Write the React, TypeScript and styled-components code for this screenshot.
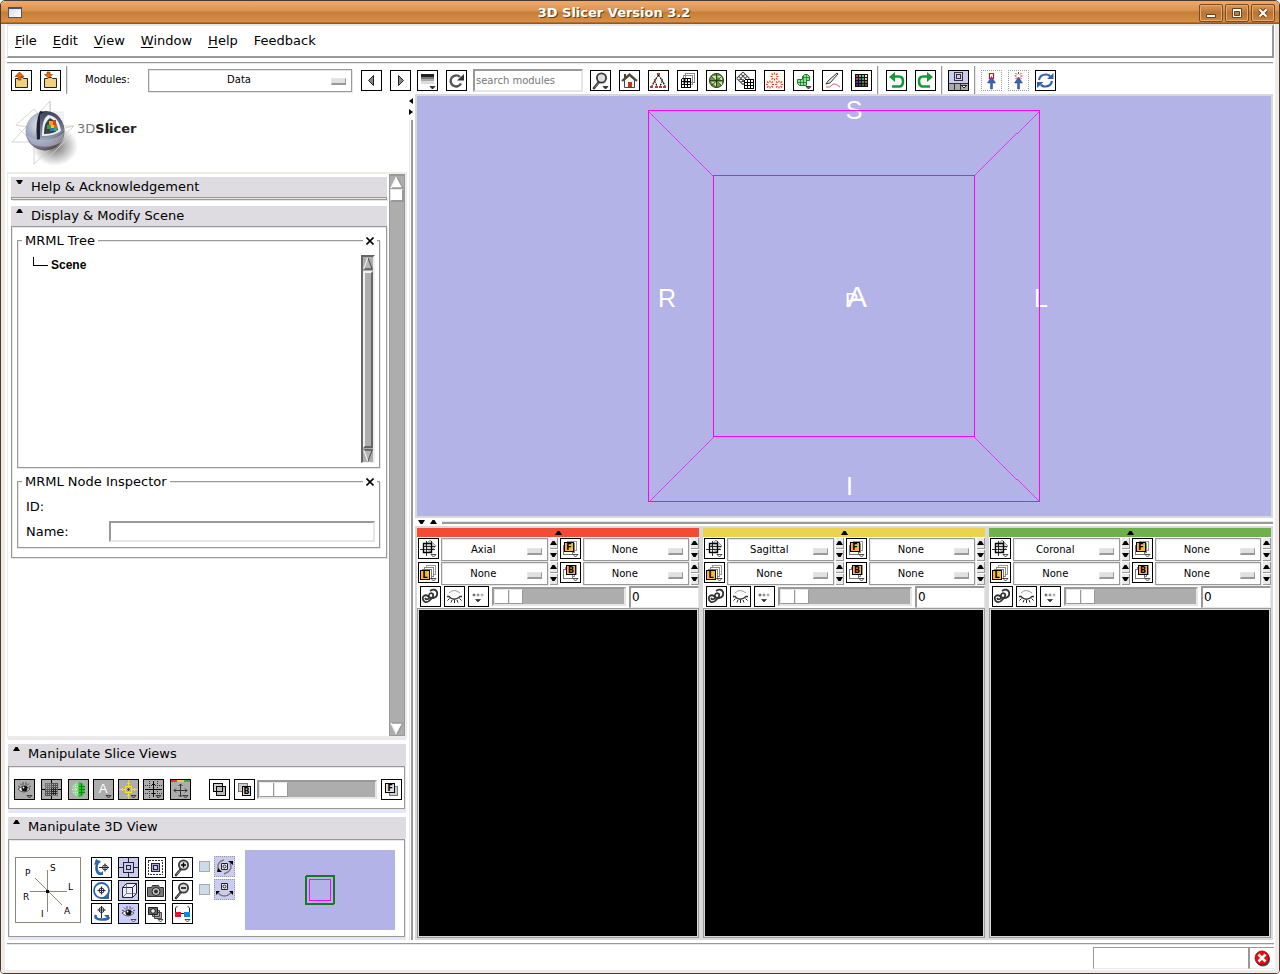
import React from "react";
import styled, { createGlobalStyle } from "styled-components";

const GlobalStyle = createGlobalStyle`
  * { box-sizing: border-box; }
  body { margin: 0; background: #fff; color: #000; font: 13px/16px "DejaVu Sans", Verdana, sans-serif; }
  button, input, select { font: inherit; color: inherit; margin: 0; padding: 0; border: 0; border-radius: 0; background: none; }
`;

const groove = `
  border: 1px solid #999;
  box-shadow: 1px 1px 0 #e6e6e6, inset 1px 1px 0 #e6e6e6;
`;
const sunken = `
  border: 2px solid;
  border-color: #999 #e6e6e6 #e6e6e6 #999;
`;

/* ---------- window frame ---------- */
const Window = styled.div`
  min-height: 100vh;
  display: flex;
  flex-direction: column;
  border: 1px solid #4a3a30;
  border-radius: 5px 5px 4px 4px;
  overflow: hidden;
`;
const TitleBar = styled.header`
  height: 23px;
  flex: none;
  display: grid;
  grid-template-columns: 22px 1fr 77px;
  align-items: center;
  padding: 0 4px 0 7px;
  background: linear-gradient(#eda96d, #dd9553 40%, #c67f38 50%, #d88e45 90%, #94571f 96%);
`;
const AppIcon = styled.span`
  width: 14px;
  height: 11px;
  border: 1px solid #555;
  border-top: 2px solid #36557c;
  background: linear-gradient(135deg, #dcdcdc, #fff);
`;
const Title = styled.h1`
  margin: 0;
  font-size: 13px;
  line-height: 20px;
  text-align: center;
  color: #fff;
  text-shadow: 1px 1px 0 #6d3f14;
`;
const WindowButtons = styled.div`
  display: flex;
  gap: 2px;
  justify-content: flex-end;
`;
const WindowButton = styled.button`
  width: 24px;
  height: 18px;
  display: flex;
  align-items: center;
  justify-content: center;
  border: 1px solid #7d4b1f;
  border-radius: 2px;
  box-shadow: inset 0 0 0 1px #e5a971;
  background: linear-gradient(#dc9a60, #b87433 50%, #c98544);
`;
const Client = styled.div`
  flex: 1;
  display: flex;
  flex-direction: column;
  border: solid #efebe7;
  border-width: 0 4px 3px;
  padding: 0 1px 0 2px;
`;

/* ---------- menu and toolbar ---------- */
const MenuBar = styled.nav`
  height: 34px;
  display: flex;
  align-items: center;
  gap: 16px;
  padding-left: 7px;
  border: 2px solid;
  border-color: #e6e6e6 #999 #999 #e6e6e6;
  border-left-width: 1px;
`;
const MenuButton = styled.button`
  line-height: 20px;
  u { text-underline-offset: 2px; }
`;
const ToolBar = styled.div`
  height: 33px;
  margin: 4px 1px 0 0;
  display: flex;
  align-items: center;
  border-top: 1px solid #999;
  box-shadow: inset 0 1px 0 #e6e6e6;
  padding: 2px 0 0 4px;
  font-size: 10px;
`;
const Group = styled.div<{ $gap?: number; $left?: number }>`
  display: flex;
  flex: none;
  gap: ${(p) => p.$gap ?? 8}px;
  margin-left: ${(p) => p.$left ?? 0}px;
`;
const Separator = styled.i`
  width: 2px;
  height: 28px;
  margin: 0 5px;
  border-left: 1px solid #999;
  border-right: 1px solid #e6e6e6;
`;
const ModulesLabel = styled.label`
  width: 63px;
  margin-left: 12px;
`;
const SearchBox = styled.input`
  ${sunken}
  width: 110px;
  height: 23px;
  margin-left: 6px;
  padding-left: 1px;
  background: #fff;
  &::placeholder { color: #777; opacity: 1; }
`;
const IconButton = styled.button<{ $bg?: string; $dotted?: boolean }>`
  width: 21px;
  height: 21px;
  flex: none;
  display: block;
  border: 1px ${(p) => (p.$dotted ? "dotted #999" : "solid #000")};
  background: ${(p) => p.$bg ?? "#fff"};
  svg { display: block; }
`;
const MenuShell = styled.span<{ $width?: string }>`
  position: relative;
  display: block;
  width: ${(p) => p.$width ?? "100%"};
  min-width: 0;
  &::after {
    content: "";
    position: absolute;
    right: 6px;
    top: 50%;
    width: 13px;
    height: 4px;
    margin-top: -2px;
    background: #e0e0e0;
    border: solid;
    border-width: 1px 1px 2px 1px;
    border-color: #e6e6e6 #999 #999 #e6e6e6;
    pointer-events: none;
  }
`;
const Select = styled.select`
  ${groove}
  display: block;
  width: 100%;
  height: 23px;
  appearance: none;
  padding-right: 22px;
  font-size: 10px;
  text-align: center;
  text-align-last: center;
  background: #fff;
`;

/* ---------- main area ---------- */
const Main = styled.main`
  flex: 1;
  display: flex;
`;
const Side = styled.aside`
  width: 400px;
  flex: none;
  display: flex;
  flex-direction: column;
`;
const Brand = styled.div`
  height: 77px;
  display: flex;
  align-items: center;
  padding-left: 4px;
`;
const BrandName = styled.span`
  margin: 0 0 10px -6px;
  color: #777;
  b { color: #222; }
`;
const ScrollArea = styled.div`
  flex: 1;
  display: flex;
  border: 2px solid #efebe7;
  border-left-width: 1px;
`;
const Panels = styled.div`
  flex: 1;
  padding: 3px 2px 0 3px;
  display: flex;
  flex-direction: column;
  gap: 6px;
`;
const Track = styled.div`
  width: 16px;
  display: flex;
  flex-direction: column;
  background: #adadad;
  border: solid #999;
  border-width: 2px 1px 1px;
`;
const Grow = styled.i<{ $thumb?: boolean }>`
  flex: 1;
  background: #adadad;
  ${(p) => p.$thumb && "border: 2px solid; border-color: #f0f0f0 #666 #666 #f0f0f0; margin: 1px 0;"}
`;
const Thumb = styled.i`
  height: 13px;
  background: #fff;
  border: solid;
  border-width: 1px 2px 2px 1px;
  border-color: #e6e6e6 #999 #999 #e6e6e6;
`;
const TreeTrack = styled(Track)`
  width: 14px;
  border-color: #666 #efefef #efefef #666;
  border-width: 2px 2px 1px 2px;
`;
const HeaderButton = styled.button<{ $tall?: boolean }>`
  display: flex;
  gap: 8px;
  align-items: flex-start;
  width: 100%;
  height: ${(p) => (p.$tall ? 22 : 20)}px;
  padding: 1px 0 0 5px;
  line-height: 18px;
  background: #dedce1;
  svg { margin-top: 2px; flex: none; }
`;
const ClosedBody = styled.div`
  ${groove}
  height: 3px;
`;
const Body = styled.div`
  ${groove}
  padding: 13px 6px 9px 5px;
  display: flex;
  flex-direction: column;
  gap: 13px;
`;
const GroupBox = styled.section`
  ${groove}
  position: relative;
  margin: 0;
`;
const GroupHead = styled.div`
  position: absolute;
  inset: -9px 2px auto 4px;
  display: flex;
  justify-content: space-between;
  h3 { margin: 0; padding: 0 3px; font-size: 13px; line-height: 18px; font-weight: 400; background: #fff; }
  button { width: 14px; height: 18px; background: #fff; display: flex; align-items: center; justify-content: center; }
`;
const Tree = styled.div`
  height: 226px;
  padding: 14px 4px 4px 14px;
  display: flex;
  justify-content: space-between;
  font: bold 12px/20px "Liberation Sans", Arial, sans-serif;
`;
const TreeNode = styled.div`
  display: flex;
  gap: 3px;
`;
const Fields = styled.div`
  display: grid;
  grid-template-columns: 83px 1fr;
  align-items: center;
  row-gap: 4px;
  padding: 14px 4px 5px 8px;
  line-height: 21px;
  input { ${sunken} height: 21px; width: 100%; }
`;
const Dock = styled.section`
  border-top: 2px solid #e6e6fa;
  padding-top: 4px;
  margin: 0 1px;
  &:last-child { border-top-width: 3px; border-bottom: 2px solid #e6e6fa; }
`;
const DockBody = styled.div`
  ${groove}
  display: flex;
  align-items: center;
  margin: 0 1px 1px 0;
`;
const SliceTools = styled(DockBody)`
  height: 43px;
  padding: 4px 2px 0 5px;
`;
const ViewTools = styled(DockBody)`
  height: 98px;
  padding: 4px 0 0 6px;
`;
const Slider = styled.input.attrs({ type: "range" })`
  flex: 1;
  min-width: 0;
  height: 19px;
  appearance: none;
  ${sunken}
  background: #adadad;
  &::-webkit-slider-thumb {
    appearance: none;
    width: 29px;
    height: 15px;
    background: linear-gradient(90deg, #fff 13px, #999 13px, #999 14px, #e6e6e6 14px, #e6e6e6 15px, #fff 15px);
    border: 1px solid;
    border-color: #e6e6e6 #999 #999 #e6e6e6;
  }
`;
const AxesBox = styled.div`
  width: 66px;
  height: 66px;
  border: 1px solid #8a8878;
  svg { display: block; }
`;
const IconGrid = styled.div`
  display: grid;
  grid-template-columns: repeat(4, 21px);
  gap: 2px 6px;
  margin-left: 10px;
`;
const Toggles = styled.div`
  display: grid;
  grid-template-columns: 11px 21px;
  gap: 2px 4px;
  align-items: center;
  align-self: flex-start;
  margin: 12px 10px 0 6px;
  input { appearance: none; width: 11px; height: 11px; border: 1px solid #aaa; background: #cddae9; }
`;
const Preview = styled.div`
  flex: 1;
  height: 80px;
  margin-right: 9px;
  display: flex;
  align-items: center;
  justify-content: center;
  background: #b3b3e7;
`;

/* ---------- splitters ---------- */
const Sash = styled.div<{ $row?: boolean }>`
  flex: none;
  display: flex;
  align-items: center;
  flex-direction: ${(p) => (p.$row ? "row" : "column")};
  gap: 5px;
  ${(p) => (p.$row ? "height: 8px; padding-left: 3px;" : "width: 8px; padding-top: 3px;")}
  i {
    flex: 1;
    ${(p) => (p.$row ? "height: 3px; border-top: 1px solid #e6e6e6; border-bottom: 2px solid #999;" : "width: 4px; border-left: 1px solid #e6e6e6; border-right: 2px solid #999;")}
  }
`;

/* ---------- viewers ---------- */
const Viewers = styled.div`
  flex: 1;
  min-width: 0;
  margin-right: 1px;
  display: flex;
  flex-direction: column;
`;
const ThreeD = styled.div`
  height: 424px;
  border: 2px solid #d9d9d9;
  background: #b3b3e7;
  margin-top: -1px;
  svg { display: block; width: 100%; height: 100%; }
`;
const Slices = styled.div`
  flex: 1;
  display: grid;
  grid-template-columns: repeat(3, 1fr);
  gap: 4px;
  padding: 2px;
  background: #d9d9d9;
`;
const Slice = styled.section`
  min-width: 0;
  display: flex;
  flex-direction: column;
  background: #fff;
`;
const ColorBar = styled.button<{ $color: string }>`
  height: 9px;
  width: 100%;
  display: flex;
  align-items: center;
  justify-content: center;
  background: ${(p) => p.$color};
`;
const Choosers = styled.div`
  display: grid;
  grid-template-columns: 21px minmax(0, 1fr) 8px 21px minmax(0, 1fr) 8px;
  column-gap: 2px;
  row-gap: 1px;
  align-items: start;
  padding: 1px 0 0 1px;
`;
const Spin = styled.div`
  display: flex;
  flex-direction: column;
  gap: 1px;
  button {
    height: 11px;
    display: flex;
    align-items: center;
    justify-content: center;
    background: #e9e9e9;
    border-right: 1px solid #999;
    border-bottom: 1px solid #999;
  }
`;
const OffsetRow = styled.div`
  height: 23px;
  display: flex;
  align-items: center;
  gap: 3px;
  padding-left: 3px;
`;
const Offset = styled.input`
  ${sunken}
  border-width: 2px 1px 1px 2px;
  width: 70px;
  height: 22px;
  padding-left: 1px;
  font-size: 12px;
`;
const Canvas = styled.div`
  flex: 1;
  background: #000;
  border: 1px solid #999;
  box-shadow: inset 0 0 0 1px #d9d9d9;
`;

/* ---------- status bar ---------- */
const StatusBar = styled.footer`
  height: 27px;
  margin-top: 3px;
  display: flex;
  justify-content: flex-end;
  border-top: 1px solid #999;
  box-shadow: inset 0 1px 0 #e6e6e6;
  padding: 3px 0 1px;
`;
const Progress = styled.div`
  width: 156px;
  border: 1px solid;
  border-color: #999 #999 #e6e6e6 #999;
`;
const ErrorButton = styled.button`
  width: 25px;
  display: flex;
  align-items: center;
  justify-content: center;
  border: solid;
  border-width: 1px 0 1px 1px;
  border-color: #999 #e6e6e6 #e6e6e6 #999;
`;

/* ---------- icons, drawn on a 21px grid that includes the button edge ---------- */
const Drop = ({ fill = "#fff", x = 13 }: { fill?: string; x?: number }) => (
  <path d={`M${x} 16.5h5l-2.5 2.5z`} fill={fill} stroke="#222" strokeWidth="0.8" />
);
const grid = (x: number, y: number, w: number, n: number) =>
  Array.from({ length: n + 1 }, (_, i) => `M${x + i * w} ${y}v${w * n}M${x} ${y + i * w}h${w * n}`).join("");
const star = (x: number, y: number) =>
  `M${x} ${y - 4}v2M${x} ${y + 2}v2M${x - 4} ${y}h2M${x + 2} ${y}h2M${x - 3} ${y - 3}l1.5 1.5M${x + 3} ${y - 3}l-1.5 1.5M${x - 3} ${y + 3}l1.5 -1.5M${x + 3} ${y + 3}l-1.5 -1.5`;
const letter = (t: string, x: number, y: number, size = 9, fill = "#000") => (
  <text x={x} y={y} fontSize={size} fontWeight="bold" fill={fill} textAnchor="middle" fontFamily="DejaVu Sans">{t}</text>
);
const lens = (sign: boolean, plus: boolean) => (
  <>
    <path d="M9 12 4 18" stroke="#333" strokeWidth="2.6" strokeLinecap="round" />
    <path d="M8.500 13 4.500 17.500" stroke="#aaa" strokeWidth="0.8" />
    <circle cx="11.500" cy="8" r="4.600" fill="#ddd" stroke="#3a3a3a" strokeWidth="1.800" />
    {sign && <path d={plus ? "M9 8h5M11.500 5.500v5" : "M9 8h5"} stroke="#000" strokeWidth="1.400" />}
  </>
);
const eye = (
  <>
    <path d="M4 10q6-5 12 0q-6 6-12 0z" fill="#fff" stroke="#333" strokeWidth="0.800" />
    <circle cx="10.500" cy="9.500" r="3" fill="#111" />
    <path d="M4 7l2 1M6 4.500l2 2M9 3v3M12 3v3M15 4.500l-2 2M17 7l-2 1" stroke="#333" strokeWidth="0.800" />
    <circle cx="9.500" cy="8.500" r="0.900" fill="#fff" />
  </>
);
const stack = (x: number, y: number) => (
  <g shapeRendering="crispEdges">
    <path d={`M${x + 4} ${y - 4}h9v9h-9z`} fill="#fff" stroke="#999" />
    <path d={`M${x + 2} ${y - 2}h9v9h-9z`} fill="#fff" stroke="#888" />
    <path d={`M${x} ${y}h9v9h-9z`} fill="#fff" stroke="#777" />
  </g>
);
const target = (x: number, y: number) => (
  <>
    <circle cx={x} cy={y} r="2.500" fill="none" stroke="#223" />
    <path d={`M${x - 4} ${y}h8M${x} ${y - 4}v8`} stroke="#223" strokeWidth="1" />
  </>
);
const undo = (
  <>
    <path d="M8 6.500h5q4 0 4 5t-4 5H6" fill="none" stroke="#129a38" strokeWidth="2.600" />
    <path fill="#129a38" d="M3 7 9 2v10z" />
  </>
);

const icons: Record<string, React.ReactNode> = {
  load: <><path d="M4.500 17.500v-9h3l1-1.500h3l1 1.500h4v9z" fill="#f0d27c" stroke="#222" /><path d="M8.500 2 4 6.500h3V10h3V6.500h3z" fill="#e8680c" stroke="#7a3300" strokeWidth="0.600" /></>,
  save: <><path d="M4.500 17.500v-9h3l1-1h3l1 1h4v9z" fill="#f0d27c" stroke="#222" /><path d="M8.500 8 4.500 4.500H7V2h3v2.500h2.500z" fill="#e8680c" stroke="#7a3300" strokeWidth="0.600" /></>,
  prev: <path d="M12.500 5.500v10L7.500 10.500z" fill="#888" stroke="#222" />,
  next: <path d="M8.500 5.500v10l5-5z" fill="#888" stroke="#222" />,
  history: <><path fill="#222" d="M4 4h13v3H4z" /><path fill="#777" d="M4 7h13v2H4z" /><path fill="#aaa" d="M4 9h13v2H4z" /><path fill="#ddd" d="M4 11h13v3H4z" /><Drop fill="#333" /></>,
  reload: <><path d="M15 13.500a5.500 5.500 0 1 1-1-6.500" fill="none" stroke="#555" strokeWidth="2.400" /><path d="M11 10.500h7V4z" fill="#333" /></>,
  search: <>{lens(false, false)}<Drop fill="#333" /></>,
  home: <><path d="M5.500 10v7.500h10V10l-5-4z" fill="#f4f4f4" stroke="#444" /><path d="M3 11 10.500 4.500 18 11" fill="none" stroke="#4a4a3c" strokeWidth="2.200" /><path fill="#5a3a2a" d="M5 4h2v4H5z" /><path fill="#b5391f" d="M9 12h4v5H9z" /></>,
  tree: <><path d="M10.500 5 6.500 11 3.500 17M10.500 5l4 6 3 6M6.500 11l3 6M14.500 11l-3 6" stroke="#000" fill="none" strokeWidth="1.200" strokeDasharray="2 1" /><path fill="#c8381c" d="M9 3h3v2H9zM6 9h2v2H6zM13 9h2v2h-2zM2 16h3v2H2zM7 16h3v2H7zM11 16h3v2h-3zM15 16h3v2h-3z" /></>,
  volumes: <g shapeRendering="crispEdges"><path d="M8.500 3.500h9v9h-9zM6.500 5.500h9v9h-9z" fill="#fff" stroke="#888" /><path d={grid(4.5, 8.5, 3, 3)} fill="none" stroke="#000" /></g>,
  models: <><circle cx="10.500" cy="10.500" r="7" fill="#6f9c4a" stroke="#1d3312" /><path fill="#c8e6ae" d="M5 6h5v5zM11 6h5v5zM5 12h5v4zM11 12h5v4z" /><path d="M10.500 3.500v14M3.500 10.500h14M5 6l11 10M16 6 5 16" stroke="#1d3312" strokeWidth="0.800" /></>,
  transforms: <><path d={grid(0, 0, 3, 3)} transform="translate(8 2) rotate(45)" stroke="#444" fill="none" /><path d="M9 9h9v9H9z" fill="#fff" /><path d={grid(9.5, 9.5, 3, 3)} fill="none" stroke="#000" shapeRendering="crispEdges" /></>,
  fiducials: <path d={star(10.5, 6.5) + star(6, 14.5) + star(15, 14.5)} stroke="#e8401c" strokeWidth="1.200" />,
  editor: <><path d="M4.500 9.500h5v-3l2-2h3l2 2v4h-3v5h-7l-2-2z" fill="#8fe08f" stroke="#1c7d2c" /><path d="M7.500 9.500v6M10.500 5v10M13.500 5v7M5 12.500h9M10 7.500h6" stroke="#1c7d2c" strokeWidth="0.800" /><Drop fill="#666" /></>,
  measure: <><path d="m4 14 2-3 9-8 1 1-8 9z" fill="#eee" stroke="#333" /><path d="M4 17q4 1 6-2t8 2" fill="none" stroke="#d8586c" /></>,
  colors: <g shapeRendering="crispEdges"><path fill="#111" d="M4 4h13v13H4z" />{["#e33", "#6b8", "#5c9", "#eec", "#a3a", "#478", "#4a5", "#cd6", "#728", "#557", "#585", "#975", "#528", "#347", "#563", "#743"].map((c, i) => <rect key={i} x={5 + (i % 4) * 3} y={5 + Math.floor(i / 4) * 3} width="2" height="2" fill={c} />)}</g>,
  undo,
  redo: <g transform="matrix(-1 0 0 1 21 0)">{undo}</g>,
  layout: <g shapeRendering="crispEdges"><path fill="#ccccef" d="M1 1h19v13H1z" /><path fill="#aaa" d="M1 14h19v6H1z" /><path d="M1 13.500h19M6.500 14v6M12.500 14v6" stroke="#333" /><path d="M6.500 2.500h8v8h-8zM8.500 4.500h4v4h-4z" fill="none" stroke="#333" /><path d="M13.500 15h5l-2.500 3z" fill="#fff" stroke="#222" /></g>,
  mouseRect: <><path d="M8.500 3.500h4v5h-4z" fill="none" stroke="#d11" strokeWidth="1.200" /><path d="M10.500 6.500 6.500 13h3v6h2v-6h3z" fill="#3a60b8" stroke="#28437f" strokeWidth="0.500" /></>,
  mouseStar: <><path d={star(10.5, 6)} stroke="#c22" /><path d="M10.500 7 6.500 13h3v6h2v-6h3z" fill="#3a60b8" stroke="#28437f" strokeWidth="0.500" /></>,
  rotate: <><path d="M4 10q1-5.500 7-5.500 3 0 4 2M17 11q-1 5.500-7 5.500-3 0-4-2" fill="none" stroke="#3461ae" strokeWidth="2.200" /><path fill="#3461ae" d="M12 9h6.500V3zM8.500 12H2v6z" /></>,
  sliceVis: <>{eye}<Drop fill="#999" /></>,
  interpolate: <g shapeRendering="crispEdges"><path fill="#777" d="M4 4h13v13H4z" /><path fill="#555" d="M10 4h7v7h-7zM4 10h6v7H4z" /><path fill="#222" d="M10 9h6v7h-6z" /><path d="M4.500 5.500h12M4.500 7.500h12M4.500 9.500h12M4.500 11.500h12M4.500 13.500h12M4.500 15.500h12" stroke="#aaa" strokeDasharray="1 1" /><path d="M10.500 1v3M10.500 17v3M1 10.500h3M17 10.500h3" stroke="#000" /></g>,
  labelOpacity: <><path fill="#9bd19b" d="M10.500 3Q4 3 4 10.500T10.500 18z" /><path fill="#22c722" d="M10.500 3q3.500 0 5 3 1.500 2 1.500 4.500t-1.500 4.500q-1.500 3-5 3z" /><path d="M13.500 4v13M11 7.500h6M11 10.500h6M11 13.500h6" stroke="#0b7a0b" strokeWidth="0.800" /><path d="M7.500 5v11M5 7.500h5M4 10.500h6M5 13.500h5" stroke="#e4f4e4" strokeWidth="0.800" strokeDasharray="1 1" /></>,
  annotation: <><text x="10" y="14" fontSize="13" fill="#fff" textAnchor="middle" fontFamily="Liberation Sans">A</text><Drop fill="#999" /></>,
  compass: <><g shapeRendering="crispEdges"><path d="M10.500 1v19M1 10.500h19M9 4.500h3M9 16.500h3M4.500 9v3M16.500 9v3M7.500 7.500h6v6h-6z" fill="none" stroke="#ffe000" /><path d="M9 10.500h3M10.500 9v3" stroke="#444" /></g><Drop fill="#999" /></>,
  crossGrid: <><g shapeRendering="crispEdges"><path d="M6.500 2v17M14.500 2v17M2 6.500h17M2 14.500h17" stroke="#333" strokeDasharray="1 1" /><path d="M10.500 2v16M2 10.500h17M9 5.500h3M9 14.500h3" stroke="#000" /></g><Drop fill="#999" /></>,
  fitAll: <><path fill="#e33" d="M1 1h6v2H1z" /><path fill="#ec4" d="M7 1h7v2H7z" /><path fill="#4a4" d="M14 1h6v2h-6z" /><path d="M10.500 5v12M4 11.500h13M8.500 7l2-2 2 2M8.500 16l2 2 2-2M6 9.500l-2 2 2 2M15 9.500l2 2-2 2" fill="none" stroke="#333" /><Drop fill="#999" /></>,
  squares: <g shapeRendering="crispEdges"><path d="M4.500 4.500h9v8h-9z" fill="#ccc" stroke="#000" /><path d="M7.500 7.500h9v9h-9z" fill="#bbb" stroke="#000" /><path d="M7.500 12.500h6v-5" stroke="#000" /></g>,
  back: <><path d="M4.500 4.500h9v8h-9z" fill="#ccc" stroke="#777" shapeRendering="crispEdges" /><path d="M8.500 7.500h8v9h-8z" fill="#ddd" stroke="#000" shapeRendering="crispEdges" />{letter("B", 12.5, 15, 8)}</>,
  front: <><path d="M8.500 7.500h8v9h-8z" fill="#ccc" stroke="#777" shapeRendering="crispEdges" /><path d="M4.500 4.500h9v9h-9z" fill="#ddd" stroke="#000" shapeRendering="crispEdges" />{letter("F", 9.2, 12, 8)}</>,
  pitch: <><path d="M9 5Q6 4 5.500 10T10 17" fill="none" stroke="#2d66a8" strokeWidth="2.600" /><path fill="#2d66a8" d="M3 8 5 2l5 3zM12 14v4H7z" />{target(14, 10.5)}<path d="M8 10.500h3" stroke="#223" /></>,
  orthographic: <g shapeRendering="crispEdges"><path d="M5.500 5.500h10v10h-10zM8.500 8.500h4v4h-4zM10.500 1v4M10.500 16v4M1 10.500h4M16 10.500h4" fill="none" stroke="#223" /></g>,
  centerView: <g shapeRendering="crispEdges"><path d="M3.500 3.500h14v14h-14z" fill="none" stroke="#333" strokeDasharray="2 1" /><path d="M6.500 6.500h8v8h-8z" fill="#a9a9e0" stroke="#223" /><path d="M8.500 8.500h4v4h-4z" fill="#ccd" stroke="#223" /></g>,
  zoomIn: lens(true, true),
  roll: <><circle cx="10.500" cy="10.500" r="7.500" fill="none" stroke="#2d66a8" strokeWidth="1.800" />{target(10.5, 10.5)}<path fill="#2d66a8" d="M11 19h7v-7z" /></>,
  perspective: <><path d="M4.500 7.500h10v10h-10zM4.500 7.500l4-4h10v10l-4 4M14.500 7.500l4-4" fill="#eef" stroke="#223" /><path d="M8.500 4v9.500h10M8.500 13.500l-4 4" fill="none" stroke="#556" strokeWidth="0.700" /></>,
  camera: <><path d="M2.500 7.500h4l1-2h6l1 2h4v9h-16z" fill="#777" stroke="#333" /><circle cx="11" cy="11.500" r="4" fill="#ccc" stroke="#222" /><circle cx="11" cy="11.500" r="2" fill="#333" /></>,
  zoomOut: lens(true, false),
  yaw: <><path d="M5 12q-2 4 5 4.500t8-2.500" fill="none" stroke="#2d66a8" strokeWidth="2.600" /><path fill="#2d66a8" d="M13 12h5v5z" />{target(10.5, 7)}<path d="M10.500 10v5" stroke="#223" /></>,
  viewVis: <>{eye}<Drop /></>,
  snapshots: <><path d="M9.500 9.500h7v6h-7zM7.500 7.500h7v6h-7z" fill="#aaa" stroke="#444" /><path d="M3.500 4.500h9v7h-9z" fill="#666" stroke="#222" /><circle cx="8" cy="8" r="2.300" fill="#eee" stroke="#222" /><Drop /></>,
  stereo: <><path fill="#e8102a" d="M3 9h6v5H3z" /><path fill="#1389cf" d="M12 9h6v5h-6z" /><path d="M3.500 9V5l2-2M17.500 9V5l-2-2M9 10.500h3" fill="none" stroke="#223" /><Drop /></>,
  spin: <><path d="M5 14Q2 9 7 5l3-1M16 7q3 5-2 9l-4 2" fill="none" stroke="#777" strokeWidth="1.400" /><path fill="#000" d="M3 16h5l-4-4zM14 5h5v4z" /><path d="M7.500 7.500h6v6h-6z" fill="#eef" stroke="#222" /><circle cx="10.500" cy="10.500" r="1.500" fill="none" stroke="#222" /></>,
  rock: <><path d="M4 14q6 6 13 0" fill="none" stroke="#777" strokeWidth="1.400" /><path fill="#000" d="M2 12h4l-4 4zM15 12h4v4z" /><path d="M7.500 4.500h6v6h-6z" fill="#eef" stroke="#222" /><circle cx="10.500" cy="7.500" r="1.500" fill="none" stroke="#222" /></>,
  reformat: <><path d="M12 2 18 8l-6 6-5-6z" fill="#ddd" stroke="#999" /><path d="M5.500 5.500h8v9h-8z" fill="none" stroke="#000" strokeWidth="1.400" /><path d="M8.500 3v15M2 11.500h15M13.500 3v10M5 8.500h12" stroke="#000" strokeWidth="0.800" /><Drop /></>,
  label: <>{stack(4.5, 7.5)}<path d="M2.500 8.500h9v9h-9z" fill="#fdb933" stroke="#000" shapeRendering="crispEdges" />{letter("L", 7, 16, 8)}<Drop /></>,
  foreground: <>{stack(3.500, 7.500)}<path d="M4.500 4.500h9v9h-9z" fill="#fdb933" stroke="#000" shapeRendering="crispEdges" />{letter("F", 9, 12, 8)}<Drop /></>,
  background: <>{stack(3.500, 7.500)}<path d="M6.500 3.500h9v9h-9z" fill="#fdb933" stroke="#000" shapeRendering="crispEdges" />{letter("B", 11, 11, 8)}<Drop /></>,
  link: <><path d="M10 5q5-3 7 1 1 5-4 6-5 0-4-3 1-3 4-1 1 2-2 5-3 4-6 3-3-2-2-5 2-3 5-1 2 2 0 3-2 1-3-1" fill="none" stroke="#333" strokeWidth="1.800" /></>,
  lid: <><path d="M5 7q5-5 11 0" fill="none" stroke="#999" /><path d="M3 10.500h2q5 5.500 11 0h2" fill="none" stroke="#333" strokeWidth="1.300" /><path d="M5.500 12.500l-2 2M8 14l-1 2.500M10.500 14v3M13 14l1 2.500M15.500 12.500l2 2" stroke="#222" /></>,
  more: <><circle cx="6" cy="9" r="1" fill="#fff" stroke="#222" strokeWidth="0.800" /><circle cx="10" cy="9" r="1" fill="#fff" stroke="#555" strokeWidth="0.800" /><circle cx="14" cy="9" r="1" fill="#fff" stroke="#888" strokeWidth="0.800" /><path d="M7.500 13.500h5L10 16z" fill="#333" stroke="#222" strokeWidth="0.600" /></>,
};

const Tool = ({ name, label, bg, dotted }: { name: string; label: string; bg?: string; dotted?: boolean }) => (
  <IconButton aria-label={label} $bg={bg} $dotted={dotted}>
    <svg width="19" height="19" viewBox="1 1 19 19" fill="none" aria-hidden="true">{icons[name]}</svg>
  </IconButton>
);

const arrows = {
  up: { w: 7, h: 4, d: "M0 4h7L4.500 0h-2z" },
  down: { w: 7, h: 4, d: "M0 0h7L4.500 4h-2z" },
  left: { w: 4, h: 6, d: "M4 0v6L0 3z" },
  right: { w: 4, h: 6, d: "M0 0v6l4-3z" },
};
const Arrow = ({ to }: { to: keyof typeof arrows }) => {
  const a = arrows[to];
  return <svg width={a.w} height={a.h} viewBox={`0 0 ${a.w} ${a.h}`} aria-hidden="true"><path d={a.d} /></svg>;
};
const ScrollArrow = ({ down, dark, size = 13 }: { down?: boolean; dark?: boolean; size?: number }) => (
  <svg width={size} height="13" viewBox="0 0 13 13" preserveAspectRatio="none" aria-hidden="true">
    <g transform={down ? "matrix(1 0 0 -1 0 13)" : undefined}>
      <path d="M6.500 1 12 12H1z" fill={dark ? "#b5b5b5" : "#fff"} />
      <path d="M6.500 1 12 12H1" fill="none" stroke={dark ? "#555" : "#999"} strokeWidth="1.400" />
      <path d="M6 1 1 12" stroke="#f4f4f4" strokeWidth="1.400" />
    </g>
  </svg>
);

const Logo = () => (
  <svg width="72" height="70" viewBox="0 0 72 70" aria-hidden="true">
    <defs>
      <radialGradient id="ball" cx=".35" cy=".35" r=".75">
        <stop offset="0" stopColor="#e4e8f2" /><stop offset=".6" stopColor="#8d94ad" /><stop offset="1" stopColor="#4c3436" />
      </radialGradient>
      <radialGradient id="shade"><stop offset="0" stopColor="#000" stopOpacity=".55" /><stop offset="1" stopColor="#000" stopOpacity="0" /></radialGradient>
      <linearGradient id="shell" x2="0" y2="1"><stop offset="0" stopColor="#3c4256" /><stop offset="1" stopColor="#8e97ad" /></linearGradient>
    </defs>
    <ellipse cx="44" cy="47" rx="23" ry="20" fill="url(#shade)" />
    <path d="M39 2v30L5 26 23 10l17 20zM1 43 39 2M1 43h38M63 27 23 65V36zM63 27H36M38 58 60 36 38 58 8 30" fill="none" stroke="#ccc" strokeWidth="0.800" />
    <path d={grid(40, 13, 3, 4)} stroke="#ddd" strokeWidth="0.700" fill="none" />
    <circle cx="34" cy="32" r="19.500" fill="url(#ball)" />
    <path d="M29 34V16q2-4 6-4 15 1 18 17v3q-9 8-24 7z" fill="url(#shell)" />
    <path d="M31 35q0-15 6-19 11 1 13 16-7 5-19 5z" fill="#e8eef2" />
    <path d="M33 34q0-11 6-15 7 3 8 12-4 4-14 4z" fill="#3d4144" />
    <g shapeRendering="crispEdges">
      <path fill="#e8a21c" d="M38 22h4v4h-4z" /><path fill="#d8421c" d="M42 21h3v5h-3z" />
      <path fill="#3aa03c" d="M36 26h4v4h-4z" /><path fill="#f3c53a" d="M40 26h4v3h-4z" /><path fill="#e06020" d="M43 26h3v4h-3z" />
      <path fill="#2678c4" d="M39 29h4v3h-4z" /><path fill="#38a86c" d="M43 29h3v3h-3z" />
    </g>
    <path d="M29 12q-5 11-3 29l3-1V16q1-2 5-3z" fill="#20232e" />
    <path d="M15 32q0 7 14 9 15 1 24-8 0 7-4 11-14 7-28 1-5-6-6-13z" fill="#b8bed0" opacity=".6" />
  </svg>
);

const Scene = () => (
  <svg viewBox="0 0 854 420" fontFamily="Liberation Sans, Arial, sans-serif" fontSize="25" fill="#fff" role="img" aria-label="Bounding cube of the 3D view">
    <text x="437" y="23" textAnchor="middle">S</text>
    <text x="241" y="211">R</text>
    <text x="617" y="211">L</text>
    <text x="429" y="399">I</text>
    <text x="440" y="211" fontSize="30" textAnchor="middle">A</text>
    <text x="428" y="211" fontSize="20">P</text>
    <g fill="none" stroke="#f0f" shapeRendering="crispEdges">
      <path d="M231.500 14.500h391v391h-391zM296.500 79.500h261v261h-261z" />
      <path d="M231.500 14.500l65 65M622.500 14.500l-65 65M231.500 405.500l65-65M622.500 405.500l-65-65" strokeWidth="0.700" />
    </g>
  </svg>
);

const CollapseHeader = ({ title, to = "up", tall }: { title: string; to?: "up" | "down"; tall?: boolean }) => (
  <HeaderButton $tall={tall}><Arrow to={to} />{title}</HeaderButton>
);

const Titled = ({ title, children }: { title: string; children: React.ReactNode }) => (
  <GroupBox>
    {children}
    <GroupHead>
      <h3>{title}</h3>
      <button aria-label={`Close ${title}`}>
        <svg width="8" height="8" viewBox="0 0 8 8"><path d="m0.500 0.500 7 7M7.500 0.500l-7 7" stroke="#000" strokeWidth="1.600" /></svg>
      </button>
    </GroupHead>
  </GroupBox>
);

const Chooser = ({ icon, label, value }: { icon: string; label: string; value: string }) => (
  <>
    <Tool name={icon} label={`${label} options`} />
    <MenuShell><Select aria-label={label} defaultValue={value}><option>{value}</option></Select></MenuShell>
    <Spin>
      <button aria-label={`Previous ${label}`}><Arrow to="up" /></button>
      <button aria-label={`Next ${label}`}><Arrow to="down" /></button>
    </Spin>
  </>
);

const SliceViewer = ({ name, color }: { name: string; color: string }) => (
  <Slice aria-label={`${name} slice`}>
    <ColorBar $color={color} aria-label={`Collapse ${name} controls`}><Arrow to="up" /></ColorBar>
    <Choosers>
      <Chooser icon="reformat" label="orientation" value={name} />
      <Chooser icon="foreground" label="foreground" value="None" />
      <Chooser icon="label" label="label map" value="None" />
      <Chooser icon="background" label="background" value="None" />
    </Choosers>
    <OffsetRow>
      <Tool name="link" label="Link slice controls" />
      <Tool name="lid" label="Show slice in 3D" />
      <Tool name="more" label="More slice options" />
      <Slider aria-label={`${name} offset`} defaultValue={0} />
      <Offset aria-label={`${name} offset value`} defaultValue="0" />
    </OffsetRow>
    <Canvas />
  </Slice>
);

const menus = ["File", "Edit", "View", "Window", "Help"];
const moduleTools: [string, string][] = [
  ["search", "Search modules"], ["home", "Home module"], ["tree", "Data module"], ["volumes", "Volumes"], ["models", "Models"],
  ["transforms", "Transforms"], ["fiducials", "Fiducials"], ["editor", "Editor"], ["measure", "Measurements"], ["colors", "Colors"],
];
const viewTools: [string, string, string?][] = [
  ["pitch", "Pitch"], ["orthographic", "Look from", "#ccccef"], ["centerView", "Center view"], ["zoomIn", "Zoom in"],
  ["roll", "Roll"], ["perspective", "Perspective", "#ccccef"], ["camera", "Screen capture"], ["zoomOut", "Zoom out"],
  ["yaw", "Yaw"], ["viewVis", "Visibility", "#ccccff"], ["snapshots", "Scene snapshots"], ["stereo", "Stereo viewing"],
];

export default function App() {
  return (
    <>
      <GlobalStyle />
      <Window>
        <TitleBar>
          <AppIcon />
          <Title>3D Slicer Version 3.2</Title>
          <WindowButtons>
            <WindowButton aria-label="Minimize"><svg width="10" height="10"><path d="M0.500 6.500h9v3h-9z" fill="#fff" stroke="#6d3f14" /></svg></WindowButton>
            <WindowButton aria-label="Maximize"><svg width="10" height="10"><path d="M0.500 0.500h9v9h-9z" fill="#fff" stroke="#6d3f14" /><path d="M2.500 3.500h5v4h-5z" fill="#c07c3a" stroke="#6d3f14" /></svg></WindowButton>
            <WindowButton aria-label="Close"><svg width="10" height="10"><path d="m1.500 1.500 7 7M8.500 1.500l-7 7" stroke="#6d3f14" strokeWidth="4" /><path d="m1.500 1.500 7 7M8.500 1.500l-7 7" stroke="#fff" strokeWidth="2.200" /></svg></WindowButton>
          </WindowButtons>
        </TitleBar>
        <Client>
          <MenuBar>
            {menus.map((m) => <MenuButton key={m}><u>{m[0]}</u>{m.slice(1)}</MenuButton>)}
            <MenuButton>Feedback</MenuButton>
          </MenuBar>
          <ToolBar>
            <Group><Tool name="load" label="Load scene" /><Tool name="save" label="Save scene" /></Group>
            <Separator />
            <ModulesLabel htmlFor="modules">Modules:</ModulesLabel>
            <MenuShell $width="204px"><Select id="modules" defaultValue="Data"><option>Data</option></Select></MenuShell>
            <Group $left={9}><Tool name="prev" label="Previous module" /><Tool name="next" label="Next module" /></Group>
            <Group $left={6}><Tool name="history" label="Module history" /><Tool name="reload" label="Refresh modules" /></Group>
            <SearchBox aria-label="Search modules" placeholder="search modules" />
            <Group $left={7}>{moduleTools.map(([n, l]) => <Tool key={n} name={n} label={l} />)}</Group>
            <Separator />
            <Group $left={2}><Tool name="undo" label="Undo" /><Tool name="redo" label="Redo" /></Group>
            <Separator />
            <Tool name="layout" label="View layout" />
            <Separator />
            <Group $gap={6}>
              <Tool name="mouseRect" label="Pick mode" dotted />
              <Tool name="mouseStar" label="Place mode" dotted />
              <Tool name="rotate" label="Transform view mode" />
            </Group>
          </ToolBar>
          <Main>
            <Side>
              <Brand><Logo /><BrandName>3D<b>Slicer</b></BrandName></Brand>
              <ScrollArea>
                <Panels>
                  <div>
                    <CollapseHeader title="Help & Acknowledgement" to="down" />
                    <ClosedBody />
                  </div>
                  <div>
                    <CollapseHeader title="Display & Modify Scene" />
                    <Body>
                      <Titled title="MRML Tree">
                        <Tree>
                          <TreeNode>
                            <svg width="16" height="14" shapeRendering="crispEdges"><path d="M1.500 2v8.500H16" fill="none" stroke="#000" /></svg>
                            Scene
                          </TreeNode>
                          <TreeTrack><ScrollArrow dark size={10} /><Grow $thumb /><ScrollArrow dark down size={10} /></TreeTrack>
                        </Tree>
                      </Titled>
                      <Titled title="MRML Node Inspector">
                        <Fields>
                          <span>ID:</span><span />
                          <label htmlFor="node-name">Name:</label><input id="node-name" />
                        </Fields>
                      </Titled>
                    </Body>
                  </div>
                </Panels>
                <Track><ScrollArrow size={14} /><Thumb /><Grow /><ScrollArrow down size={14} /></Track>
              </ScrollArea>
              <Dock>
                <CollapseHeader title="Manipulate Slice Views" tall />
                <SliceTools>
                  <Group $gap={6}><Tool name="sliceVis" label="Slice visibility" bg="#adadad" /><Tool name="interpolate" label="Interpolation" bg="#adadad" /></Group>
                  <Group $gap={4} $left={6}>
                    <Tool name="labelOpacity" label="Label opacity" bg="#adadad" />
                    <Tool name="annotation" label="Annotations" bg="#adadad" />
                    <Tool name="compass" label="Crosshair" bg="#adadad" />
                    <Tool name="crossGrid" label="Grid" bg="#adadad" />
                  </Group>
                  <Group $left={6}><Tool name="fitAll" label="Fit to window" bg="#adadad" /></Group>
                  <Group $gap={4} $left={18}><Tool name="squares" label="Toggle layers" /><Tool name="back" label="Show background" /></Group>
                  <Group $left={2} />
                  <Slider aria-label="Layer fade" defaultValue={0} />
                  <Group $left={4}><Tool name="front" label="Show foreground" /></Group>
                </SliceTools>
              </Dock>
              <Dock>
                <CollapseHeader title="Manipulate 3D View" tall />
                <ViewTools>
                  <AxesBox>
                    <svg width="64" height="64" fontFamily="DejaVu Sans" fontSize="9" role="img" aria-label="View axes">
                      <path d="M31.500 12v42M14 33.500h37M19 20l27 27" stroke="#8a8878" />
                      <path d="M30 32h3v3h-3z" />
                      <text x="9" y="18">P</text><text x="34" y="13">S</text><text x="52" y="32">L</text>
                      <text x="7" y="42">R</text><text x="25" y="59">I</text><text x="48" y="56">A</text>
                    </svg>
                  </AxesBox>
                  <IconGrid>{viewTools.map(([n, l, bg]) => <Tool key={n} name={n} label={l} bg={bg} />)}</IconGrid>
                  <Toggles>
                    <input type="checkbox" aria-label="Spin view" /><Tool name="spin" label="Spin" bg="#ccccef" dotted />
                    <input type="checkbox" aria-label="Rock view" /><Tool name="rock" label="Rock" bg="#ccccef" dotted />
                  </Toggles>
                  <Preview>
                    <svg width="30" height="30" shapeRendering="crispEdges" role="img" aria-label="3D view overview">
                      <rect x="1" y="1" width="28" height="28" rx="1" fill="none" stroke="#177a22" strokeWidth="2" />
                      <path d="M4.500 4.500h21v21h-21z" fill="none" stroke="#f0f" />
                    </svg>
                  </Preview>
                </ViewTools>
              </Dock>
            </Side>
            <Sash><Arrow to="left" /><Arrow to="right" /><i /></Sash>
            <Viewers>
              <ThreeD><Scene /></ThreeD>
              <Sash $row><Arrow to="down" /><Arrow to="up" /><i /></Sash>
              <Slices>
                <SliceViewer name="Axial" color="#f44b34" />
                <SliceViewer name="Sagittal" color="#ecd34d" />
                <SliceViewer name="Coronal" color="#6eb04c" />
              </Slices>
            </Viewers>
          </Main>
          <StatusBar>
            <Progress />
            <ErrorButton aria-label="Show errors">
              <svg width="17" height="17" viewBox="0 0 17 17">
                <circle cx="9" cy="9.500" r="7" fill="#555" /><circle cx="8" cy="8" r="7" fill="#e80c0c" stroke="#7c0808" strokeWidth="0.800" />
                <path d="m4.500 4.500 7 7M11.500 4.500l-7 7" stroke="#fff" strokeWidth="2.600" />
              </svg>
            </ErrorButton>
          </StatusBar>
        </Client>
      </Window>
    </>
  );
}
